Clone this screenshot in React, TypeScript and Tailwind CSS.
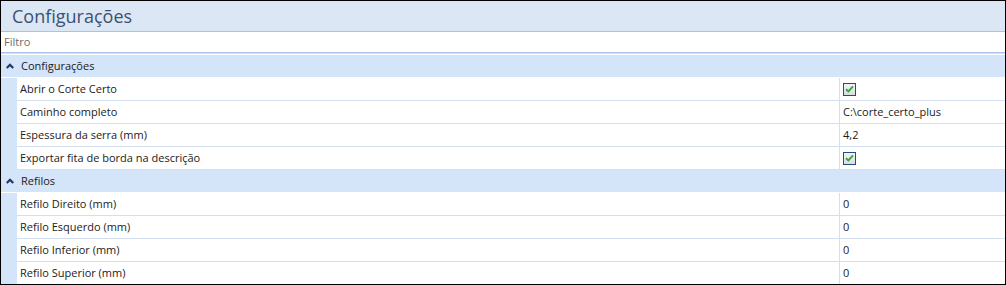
import React from 'react';

type Row = { label: string; value?: string; checked?: boolean };
type Group = { title: string; rows: Row[] };

const groups: Group[] = [
  {
    title: 'Configurações',
    rows: [
      { label: 'Abrir o Corte Certo', checked: true },
      { label: 'Caminho completo', value: 'C:\\corte_certo_plus' },
      { label: 'Espessura da serra (mm)', value: '4,2' },
      { label: 'Exportar fita de borda na descrição', checked: true },
    ],
  },
  {
    title: 'Refilos',
    rows: [
      { label: 'Refilo Direito (mm)', value: '0' },
      { label: 'Refilo Esquerdo (mm)', value: '0' },
      { label: 'Refilo Inferior (mm)', value: '0' },
      { label: 'Refilo Superior (mm)', value: '0' },
    ],
  },
];

const CheckBox = () => (
  <div className="w-[13px] h-[13px] border border-[#1f4f80] bg-gradient-to-b from-[#f4f4f4] to-[#d9dde3] flex items-center justify-center">
    <svg width="9" height="8" viewBox="0 0 9 8">
      <path d="M1 4.2 L3.4 6.4 L8 1.4" fill="none" stroke="#3aa83a" strokeWidth="2" />
    </svg>
  </div>
);

const Caret = () => (
  <svg width="8" height="6" viewBox="0 0 8 6" className="shrink-0">
    <path d="M0.8 5 L4 1.8 L7.2 5" fill="none" stroke="#1d3a66" strokeWidth="2.2" />
  </svg>
);

export default function App() {
  return (
    <div
      className="w-[1006px] h-[285px] border border-black bg-white overflow-hidden flex flex-col text-[11px] text-[#1b1b1b]"
      style={{ fontFamily: '"Open Sans", "Noto Sans", Arial, sans-serif' }}
    >
      <div className="h-[31px] shrink-0 bg-[#dce7f5] border-b border-[#a7c3ea] flex items-center pl-[11px]">
        <span className="text-[18px] text-[#3d5170] leading-none">Configurações</span>
      </div>
      <div className="h-[21px] shrink-0 bg-white border-b border-[#a7c3ea] flex items-center pl-[3px] text-[#6c6c6c]">
        Filtro
      </div>
      <div className="h-px shrink-0 bg-[#d4e4f8]" />
      <div className="h-px shrink-0 bg-white" />
      <div className="flex flex-col">
        {groups.map((g) => (
          <div key={g.title} className="flex flex-col">
            <div className="h-[23px] shrink-0 bg-[#d4e4f9] border-b border-white flex items-center">
              <div className="w-[17px] flex justify-center">
                <Caret />
              </div>
              <span className="pl-[3px]">{g.title}</span>
            </div>
            {g.rows.map((r) => (
              <div key={r.label} className="h-[23px] shrink-0 flex bg-[#d4e4f9]">
                <div className="w-[16px] shrink-0" />
                <div className="flex-1 flex bg-white border-b border-[#d3deef]">
                  <div className="w-[823px] shrink-0 border-r border-[#d3deef] flex items-center pl-[3px]">
                    {r.label}
                  </div>
                  <div className="flex-1 flex items-center pl-[3px]">
                    {r.checked ? <CheckBox /> : r.value}
                  </div>
                </div>
              </div>
            ))}
          </div>
        ))}
      </div>
    </div>
  );
}
